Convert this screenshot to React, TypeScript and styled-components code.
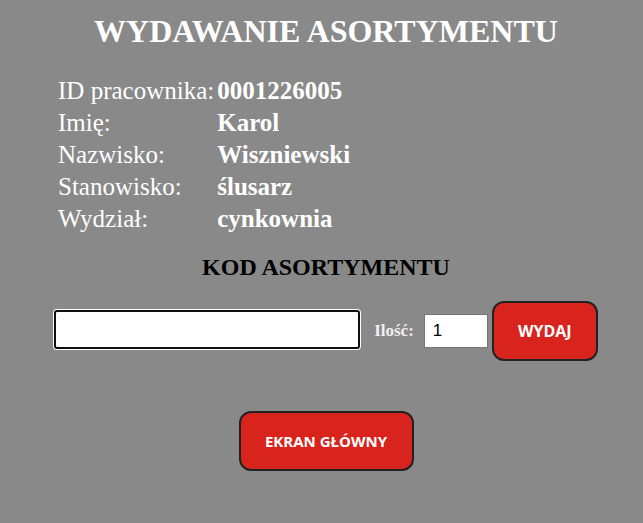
import React from "react";
import styled, { createGlobalStyle } from "styled-components";

const Global = createGlobalStyle`
  html, body { margin: 0; padding: 0; background: #898989; }
  body { font-family: "Liberation Serif", "Times New Roman", serif; }
`;

const Page = styled.div`
  box-sizing: border-box;
  width: 643px;
  min-height: 523px;
  padding: 13px 0 0 9px;
  display: flex;
  flex-direction: column;
  align-items: center;
`;

const Title = styled.h1`
  margin: 0;
  font-size: 32px;
  font-weight: bold;
  color: #ffffff;
  line-height: 37px;
`;

const InfoGrid = styled.div`
  align-self: flex-start;
  margin: 25px 0 0 49px;
  display: grid;
  grid-template-columns: auto auto;
  column-gap: 3px;
  grid-auto-rows: 32px;
  align-items: center;
  color: #ffffff;
  font-size: 25px;
`;

const Label = styled.div`
  font-weight: normal;
`;

const Value = styled.div`
  font-weight: bold;
`;

const Subtitle = styled.h2`
  margin: 18px 0 0;
  font-size: 24px;
  font-weight: bold;
  color: #000000;
  line-height: 28px;
`;

const FormRow = styled.div`
  margin-top: 20px;
  display: flex;
  align-items: center;
`;

const CodeInput = styled.input`
  box-sizing: border-box;
  width: 306px;
  height: 39px;
  margin-top: -3px;
  border: 2px solid #101010;
  border-radius: 3px;
  box-shadow: 0 0 0 1px #ffffff;
  outline: none;
  background: #ffffff;
  font-size: 18px;
  padding: 0 4px;
`;

const QtyLabel = styled.span`
  margin-left: 14px;
  font-size: 17px;
  font-weight: bold;
  color: #f0f0f0;
`;

const QtyInput = styled.input`
  box-sizing: border-box;
  margin-left: 10px;
  width: 64px;
  height: 34px;
  border: 1px solid #767676;
  background: #ffffff;
  outline: none;
  font-family: "Liberation Sans", Arial, sans-serif;
  font-size: 17px;
  padding: 0 0 0 8px;
  color: #000;
`;

const RedButton = styled.button<{ $w: number; $fs: number }>`
  box-sizing: border-box;
  width: ${(p) => p.$w}px;
  height: 60px;
  background: #d9241d;
  border: 2px solid #222222;
  border-radius: 12px;
  color: #ffffff;
  font-family: "Open Sans", "Noto Sans", sans-serif;
  font-weight: bold;
  font-size: ${(p) => p.$fs}px;
  cursor: pointer;
`;

const SideButton = styled(RedButton)`
  margin-left: 4px;
`;

const MainButton = styled(RedButton)`
  margin-top: 50px;
`;

const rows: [string, string][] = [
  ["ID pracownika:", "0001226005"],
  ["Imię:", "Karol"],
  ["Nazwisko:", "Wiszniewski"],
  ["Stanowisko:", "ślusarz"],
  ["Wydział:", "cynkownia"],
];

export default function App() {
  return (
    <>
      <Global />
      <Page>
        <Title>WYDAWANIE ASORTYMENTU</Title>
        <InfoGrid>
          {rows.map(([l, v]) => (
            <React.Fragment key={l}>
              <Label>{l}</Label>
              <Value>{v}</Value>
            </React.Fragment>
          ))}
        </InfoGrid>
        <Subtitle>KOD ASORTYMENTU</Subtitle>
        <FormRow>
          <CodeInput autoFocus />
          <QtyLabel>Ilość:</QtyLabel>
          <QtyInput defaultValue="1" />
          <SideButton $w={106} $fs={16}>WYDAJ</SideButton>
        </FormRow>
        <MainButton $w={175} $fs={15}>EKRAN GŁÓWNY</MainButton>
      </Page>
    </>
  );
}
